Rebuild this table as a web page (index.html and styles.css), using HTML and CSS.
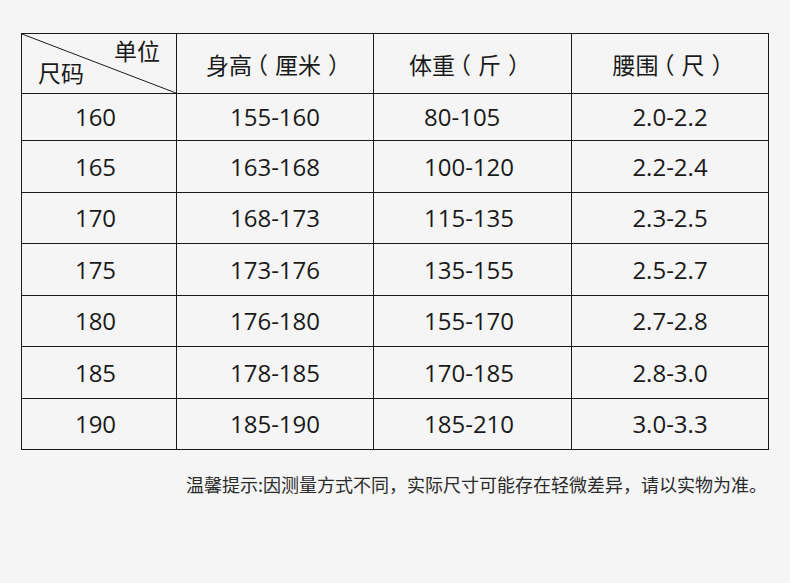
FILE: index.html
```html
<!DOCTYPE html>
<html lang="zh-CN">
<head>
<meta charset="utf-8">
<title>尺码表</title>
<link rel="stylesheet" href="styles.css">
</head>
<body>
<div class="page">
  <table class="size-table">
    <colgroup>
      <col class="c1"><col class="c2"><col class="c3"><col class="c4">
    </colgroup>
    <thead>
      <tr class="head-row">
        <th class="corner">
          <svg class="diag" viewBox="0 0 100 100" preserveAspectRatio="none"><line x1="0" y1="0" x2="100" y2="100" stroke="#1a1a1a" stroke-width="1" vector-effect="non-scaling-stroke"/></svg>
          <div class="corner-inner">
            <span class="unit">单位</span>
            <span class="size">尺码</span>
          </div>
        </th>
        <th>身高<span class="lp">（</span>厘米<span class="rp">）</span></th>
        <th class="col3">体重<span class="lp">（</span>斤<span class="rp">）</span></th>
        <th>腰围<span class="lp">（</span>尺<span class="rp">）</span></th>
      </tr>
    </thead>
    <tbody>
      <tr class="r1"><td class="col1">160</td><td>155-160</td><td class="col3">80-105</td><td>2.0-2.2</td></tr>
      <tr class="ra"><td class="col1">165</td><td>163-168</td><td class="col3">100-120</td><td>2.2-2.4</td></tr>
      <tr class="rb"><td class="col1">170</td><td>168-173</td><td class="col3">115-135</td><td>2.3-2.5</td></tr>
      <tr class="ra"><td class="col1">175</td><td>173-176</td><td class="col3">135-155</td><td>2.5-2.7</td></tr>
      <tr class="rb"><td class="col1">180</td><td>176-180</td><td class="col3">155-170</td><td>2.7-2.8</td></tr>
      <tr class="ra"><td class="col1">185</td><td>178-185</td><td class="col3">170-185</td><td>2.8-3.0</td></tr>
      <tr class="rb"><td class="col1">190</td><td>185-190</td><td class="col3">185-210</td><td>3.0-3.3</td></tr>
    </tbody>
  </table>
  <p class="note">温馨提示:因测量方式不同，实际尺寸可能存在轻微差异，请以实物为准。</p>
</div>
</body>
</html>
```

FILE: styles.css
```css
html, body {
  margin: 0;
  padding: 0;
  background: #f5f5f5;
}

.page {
  width: 790px;
  height: 583px;
  padding: 33px 0 0 21px;
  box-sizing: border-box;
  font-family: "Noto Sans CJK SC", "Noto Sans", sans-serif;
  color: #1a1a1a;
}

.size-table {
  border-collapse: collapse;
  table-layout: fixed;
  width: 747px;
}

.size-table col.c1 { width: 155px; }
.size-table col.c2 { width: 197px; }
.size-table col.c3 { width: 198px; }
.size-table col.c4 { width: 197px; }

.size-table th,
.size-table td {
  border: 1px solid #1a1a1a;
  padding: 0;
  text-align: center;
  font-weight: normal;
  line-height: 1;
  box-sizing: border-box;
}

.size-table th {
  font-size: 23px;
  padding-top: 2px;
}

.size-table td {
  font-family: "Open Sans", "Noto Sans CJK SC", sans-serif;
  font-size: 24px;
}

.lp,
.rp {
  font-feature-settings: "halt" 1;
}

.lp {
  margin-left: 0.2em;
  margin-right: 0.3em;
}

.rp {
  margin-left: 0.3em;
  margin-right: 0.2em;
}

.head-row { height: 60px; }
.r1 { height: 47px; }
.ra { height: 52px; }
.rb { height: 51px; }

.size-table td.col1 { padding-right: 7px; }
.size-table td.col3 { text-align: left; padding-left: 50px; }
.size-table th.col3 { padding-right: 12px; }

.corner {
  position: relative;
}

.size-table th.corner { padding: 0; }

.diag {
  position: absolute;
  left: 0;
  top: 0;
  width: 100%;
  height: 100%;
  display: block;
}

.corner-inner {
  display: flex;
  flex-direction: column;
  height: 59px;
  padding-top: 5px;
  box-sizing: border-box;
  line-height: 23px;
  font-size: 23px;
}

.unit {
  align-self: flex-end;
  margin-right: 16px;
}

.size {
  align-self: flex-start;
  margin-left: 16px;
  margin-top: -1px;
}

.note {
  margin: 23px 0 0 165px;
  font-size: 18px;
  line-height: 22px;
  color: #2a2a2a;
  white-space: nowrap;
}
```
